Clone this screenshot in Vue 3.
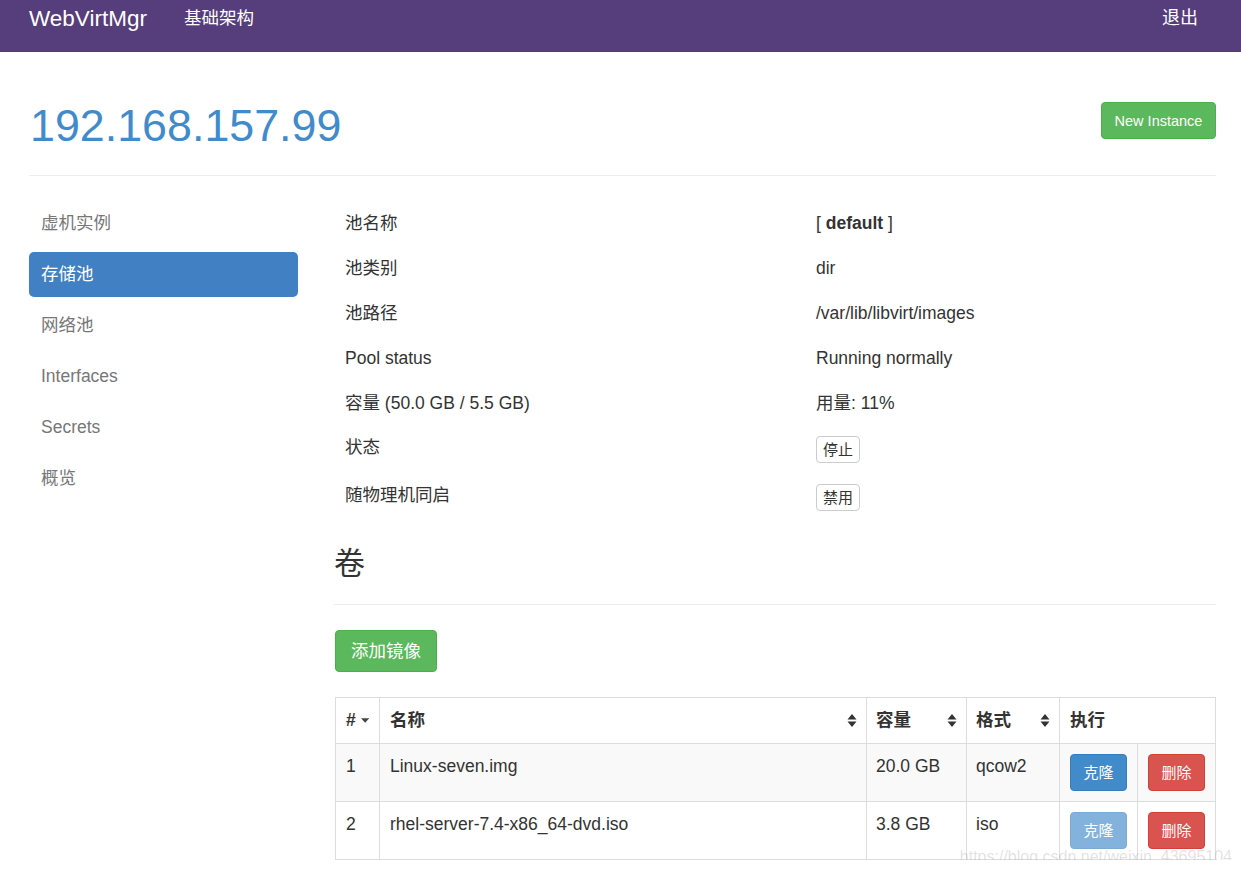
<template>
  <div class="page">
    <nav class="navbar">
      <div class="navbar__left">
        <a class="navbar__brand">WebVirtMgr</a>
        <a class="navbar__link">基础架构</a>
      </div>
      <a class="navbar__logout">退出</a>
    </nav>

    <div class="container">
      <header class="page-header">
        <h1 class="page-header__title">192.168.157.99</h1>
        <a class="btn btn--success">New Instance</a>
      </header>

      <div class="layout">
        <ul class="pills">
          <li
            v-for="item in menu"
            :key="item"
            class="pills__item"
            :class="{ 'pills__item--active': item === '存储池' }"
          >
            {{ item }}
          </li>
        </ul>

        <main class="content">
          <table class="info">
            <tbody>
              <tr v-for="row in info" :key="row[0]">
                <td class="info__label">{{ row[0] }}</td>
                <td><template v-if="row[2]">[ <strong>{{ row[1] }}</strong> ]</template><template v-else>{{ row[1] }}</template></td>
              </tr>
              <tr class="info__btn-row">
                <td class="info__label">状态</td>
                <td><a class="btn btn--xs">停止</a></td>
              </tr>
              <tr class="info__btn-row">
                <td class="info__label">随物理机同启</td>
                <td><a class="btn btn--xs">禁用</a></td>
              </tr>
            </tbody>
          </table>

          <h3 class="section-title">卷</h3>
          <a class="btn btn--success btn--add">添加镜像</a>

          <table class="volumes">
            <colgroup>
              <col class="volumes__c1" />
              <col class="volumes__c2" />
              <col class="volumes__c3" />
              <col class="volumes__c4" />
              <col class="volumes__c5" />
              <col class="volumes__c6" />
            </colgroup>
            <thead>
              <tr>
                <th>
                  <span class="volumes__head">#
                    <svg class="sort" width="9" height="5" viewBox="0 0 9 5"><path d="M0 0h9L4.5 5z" fill="#444" /></svg>
                  </span>
                </th>
                <th v-for="h in sortable" :key="h">
                  <span class="volumes__head volumes__head--spread">{{ h }}
                    <svg class="sort" width="10" height="13" viewBox="0 0 10 13"><path d="M5 0l4.5 5.5H.5zM5 13L.5 7.5h9z" fill="#333" /></svg>
                  </span>
                </th>
                <th colspan="2">执行</th>
              </tr>
            </thead>
            <tbody>
              <tr v-for="(v, i) in volumes" :key="v.name">
                <td>{{ i + 1 }}</td>
                <td>{{ v.name }}</td>
                <td>{{ v.size }}</td>
                <td>{{ v.format }}</td>
                <td class="volumes__action">
                  <a class="btn btn--primary" :class="{ 'btn--disabled': v.locked }">克隆</a>
                </td>
                <td class="volumes__action">
                  <a class="btn btn--danger">删除</a>
                </td>
              </tr>
            </tbody>
          </table>
        </main>
      </div>
    </div>

    <div class="watermark">https://blog.csdn.net/weixin_43695104</div>
  </div>
</template>

<script setup>
const menu = ['虚机实例', '存储池', '网络池', 'Interfaces', 'Secrets', '概览']

const info = [
  ['池名称', 'default', true],
  ['池类别', 'dir'],
  ['池路径', '/var/lib/libvirt/images'],
  ['Pool status', 'Running normally'],
  ['容量 (50.0 GB / 5.5 GB)', '用量: 11%'],
]

const sortable = ['名称', '容量', '格式']

const volumes = [
  { name: 'Linux-seven.img', size: '20.0 GB', format: 'qcow2' },
  { name: 'rhel-server-7.4-x86_64-dvd.iso', size: '3.8 GB', format: 'iso', locked: true },
]
</script>

<style>
body {
  background: #fff;
}
</style>

<style scoped>
.page {
  color: #333;
  font-family: "Liberation Sans", "Noto Sans CJK SC", sans-serif;
  font-size: 17.5px;
  line-height: 25px;
  position: relative;
}

.navbar {
  background: #563d7c;
  color: #fff;
  display: flex;
  height: 52px;
  justify-content: space-between;
  padding: 6px 43px 0 29px;
  box-sizing: border-box;
}

.navbar__left {
  align-items: flex-start;
  display: flex;
  gap: 37px;
}

.navbar__brand {
  font-size: 22.5px;
}

.navbar__logout {
  font-size: 18px;
}

.container {
  padding: 0 25px 0 29px;
}

.page-header {
  align-items: flex-start;
  border-bottom: 1px solid #eee;
  display: flex;
  height: 124px;
  justify-content: space-between;
  box-sizing: border-box;
}

.page-header__title {
  color: #428bca;
  font-size: 44.8px;
  font-weight: 400;
  line-height: 50px;
  margin: 48px 0 0 1px;
}

.btn {
  border: 1px solid transparent;
  border-radius: 4px;
  box-sizing: border-box;
  color: #fff;
  display: inline-block;
  font-size: 15px;
  line-height: 21px;
  padding: 7px 13px;
  text-align: center;
}

.btn--success {
  background: #5cb85c;
  border-color: #4cae4c;
}

.page-header .btn {
  font-size: 14.5px;
  margin-top: 50px;
  width: 115px;
  padding: 8px 0 6px;
}

.btn--primary {
  background: #428bca;
  border-color: #357ebd;
  width: 57px;
  padding: 7px 0;
}

.btn--disabled {
  opacity: 0.65;
}

.btn--danger {
  background: #d9534f;
  border-color: #d43f3a;
  width: 57px;
  padding: 7px 0;
}

.btn--xs {
  background: #fff;
  border-color: #ccc;
  color: #333;
  display: block;
  line-height: 19px;
  padding: 3px 6px;
  width: 44px;
}

.btn--add {
  font-size: 17.5px;
  padding: 8px 15px;
  line-height: 24px;
  width: 102px;
  display: block;
  white-space: nowrap;
}

.layout {
  display: flex;
  gap: 37px;
  padding-top: 25px;
}

.pills {
  flex: 0 0 269px;
  list-style: none;
  margin: 0;
  padding: 0;
}

.pills__item {
  border-radius: 5px;
  color: #777;
  height: 45px;
  line-height: 45px;
  padding: 0 12px;
}

.pills__item + .pills__item {
  margin-top: 6px;
}

.pills__item--active {
  background: #4080c3;
  color: #fff;
}

.content {
  flex: 1;
  min-width: 0;
}

.info {
  border-collapse: collapse;
  width: 100%;
}

.info td {
  box-sizing: border-box;
  height: 45px;
  padding: 0 10px;
  vertical-align: middle;
}

.info td:first-child {
  width: 471px;
}

.info .info__btn-row td {
  height: 48px;
  padding-top: 10px;
  vertical-align: top;
}

.info .info__btn-row td:first-child {
  padding-top: 9px;
}

.section-title {
  border-bottom: 1px solid #eee;
  font-size: 31px;
  font-weight: 400;
  height: 83px;
  line-height: 36px;
  margin: 0 0 25px -1px;
  padding-top: 24px;
  box-sizing: border-box;
}

.volumes {
  border-collapse: collapse;
  margin-top: 25px;
  table-layout: fixed;
  width: 880px;
}

.volumes th,
.volumes td {
  border: 1px solid #ddd;
  box-sizing: border-box;
  padding: 10px;
  text-align: left;
  vertical-align: top;
}

.volumes th {
  font-weight: 700;
  height: 46px;
}

.volumes tbody td {
  height: 58px;
}

.volumes th:nth-child(3),
.volumes th:nth-child(4),
.volumes td:nth-child(3),
.volumes td:nth-child(4) {
  padding-left: 9px;
}

.volumes tbody tr:nth-child(odd) td {
  background: #f9f9f9;
}

.volumes__head {
  align-items: center;
  display: flex;
  gap: 5px;
}

.volumes__head--spread {
  justify-content: space-between;
  margin-right: -1px;
}

.volumes tbody .volumes__action {
  padding-bottom: 0;
}

.volumes__c1 { width: 44px; }
.volumes__c2 { width: 487px; }
.volumes__c3 { width: 100px; }
.volumes__c4 { width: 93px; }
.volumes__c5 { width: 78px; }
.volumes__c6 { width: 78px; }

.watermark {
  color: rgba(150, 150, 150, 0.28);
  font-size: 16px;
  line-height: 20px;
  position: absolute;
  right: 9px;
  top: 847px;
  white-space: nowrap;
}
</style>
